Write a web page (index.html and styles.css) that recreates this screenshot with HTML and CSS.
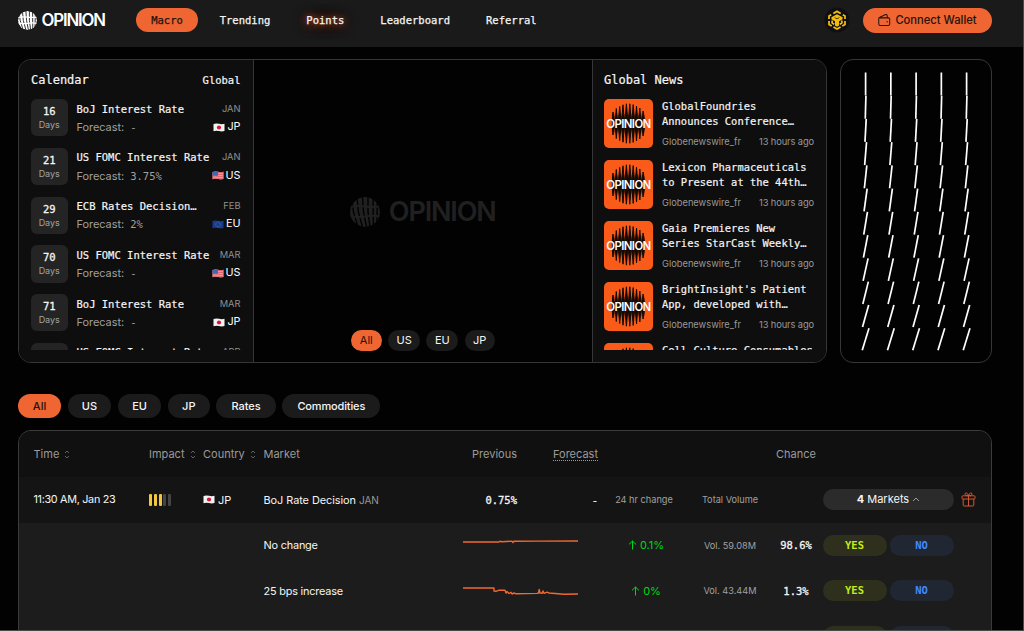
FILE: index.html
```html
<!DOCTYPE html>
<html lang="en">
<head>
<meta charset="utf-8">
<title>Opinion – Macro</title>
<link rel="stylesheet" href="styles.css">
</head>
<body>
<svg class="defs" width="0" height="0" aria-hidden="true">
  <defs>
    <clipPath id="disc"><circle cx="15" cy="15" r="15"/></clipPath>
    <linearGradient id="core" x1="0" x2="0" y1="0" y2="1"><stop offset="0" stop-color="#160a05" stop-opacity="0"/><stop offset=".35" stop-color="#160a05"/><stop offset=".65" stop-color="#160a05"/><stop offset="1" stop-color="#160a05" stop-opacity="0"/></linearGradient>
    <symbol id="globe" viewBox="0 0 30 30">
      <g clip-path="url(#disc)">
        <circle cx="15" cy="15" r="15" fill="currentColor"/>
        <g class="slits" fill="none" stroke-width="1.4">
          <path d="M1.5 0L3.5 15L8 30M7 0L8.4 15L12.5 30M12.5 0L13.5 15L16.5 30M18 0V15L20 30M23 0L23.4 30M27.4 0L26.8 30"/>
        </g>
        <path d="M0 10Q8 8.5 15 9.5T30 9.5M0 18.5Q7 21 15 19.5T30 19.5" fill="none" stroke="currentColor" stroke-width="2"/>
      </g>
    </symbol>
    <symbol id="jp" viewBox="0 0 12 9"><path d="M.5 1Q3 0 6 .8T11.5.7V8Q9 8.8 6 8.1T.5 8.2Z" fill="#f2f2f2"/><circle cx="6" cy="4.5" r="2.1" fill="#d5173c"/></symbol>
    <symbol id="us" viewBox="0 0 12 9"><path d="M.5 1Q3 0 6 .8T11.5.7V8Q9 8.8 6 8.1T.5 8.2Z" fill="#e8a9b0"/><path d="M.5 1.6Q3 .7 6 1.4T11.5 1.3M.5 3.5Q3 2.6 6 3.2T11.5 3.1M.5 5.4Q3 4.7 6 5.2T11.5 5M.5 7.4Q3 6.7 6 7.2T11.5 7" fill="none" stroke="#de5a62" stroke-width="1"/><path d="M.5 1Q3 0 6 .8V4.8H.5Z" fill="#3d68b4"/></symbol>
    <symbol id="eu" viewBox="0 0 12 9"><path d="M.5 1Q3 0 6 .8T11.5.7V8Q9 8.8 6 8.1T.5 8.2Z" fill="#153c95"/><circle cx="6" cy="4.5" r="2.3" fill="none" stroke="#8a905f" stroke-width=".6" stroke-dasharray=".7 .5"/></symbol>
    <symbol id="burst" viewBox="0 0 49 49">
      <path d="M8.3 20L9 13L9.7 20V29L9 36L8.3 29ZM11.4 20L12.3 9.5L13.2 20V29L12.3 39.5L11.4 29ZM14.6 20L15.7 7.5L16.8 20V29L15.7 41.5L14.6 29ZM17.8 20L19 5.8L20.2 20V29L19 43.2L17.8 29ZM21.1 20L22.4 4.8L23.7 20V29L22.4 44.2L21.1 29ZM24.5 20L25.8 4.8L27.1 20V29L25.8 44.2L24.5 29ZM28 20L29.2 5.6L30.4 20V29L29.2 43.4L28 29ZM31.4 20L32.5 7L33.6 20V29L32.5 42L31.4 29ZM34.8 20L35.8 9L36.8 20V29L35.8 40L34.8 29ZM38.2 20L39.1 12L40 20V29L39.1 37L38.2 29Z" fill="#160a05" stroke="#160a05" stroke-width="1"/>
      <path d="M8 14H41V35H8Z" fill="url(#core)"/>
    </symbol>
    <symbol id="sort" viewBox="0 0 6 9"><path d="M1 3L3 1L5 3M1 6L3 8L5 6" fill="none" stroke="currentColor" stroke-width=".8"/></symbol>
    <symbol id="up" viewBox="0 0 9 10"><path d="M4.5 9.5V1M1 4.4L4.5 1L8 4.4" fill="none" stroke="currentColor" stroke-width="1"/></symbol>
  </defs>
</svg>

<div class="page">
  <header class="topbar">
    <div class="brand"><svg class="brand-mark"><use href="#globe"/></svg><span class="brand-name">OPINION</span></div>
    <nav class="nav">
      <a class="nav-link active">Macro</a>
      <a class="nav-link">Trending</a>
      <a class="nav-link glow">Points</a>
      <a class="nav-link">Leaderboard</a>
      <a class="nav-link">Referral</a>
    </nav>
    <div class="actions">
      <svg class="chain" viewBox="0 0 28 28">
        <circle cx="14" cy="14" r="13.5" fill="#101014"/>
        <g fill="none" stroke="#f5bd0b" stroke-width="1.9" stroke-linejoin="round">
          <path d="M10 7L14 4.7L18 7M20.2 8.4L22.6 9.8V13M22.6 15V18.8L19.7 20.5M17.8 21.6L14 23.8L10.2 21.6M8.3 20.5L5.4 18.8V15M5.4 13V9.8L7.8 8.4"/>
          <path d="M8.8 14.5V17.2L11 18.5M19.2 14.5V17.2L17 18.5"/>
        </g>
        <path d="M14 7.8L20 11V13.2L16.2 15.4V20L14 21.2L11.8 20V15.4L8 13.2V11Z" fill="#f5bd0b"/><path d="M11.4 11.3L14 12.8L16.6 11.3" fill="none" stroke="#101014" stroke-width=".8"/>
      </svg>
      <button class="connect">
        <svg class="wallet" viewBox="0 0 14 14"><path d="M1.8 4.7H11.2Q12.6 4.7 12.6 6V11.3Q12.6 12.8 11.2 12.8H2.3Q.8 12.8.8 11.3V5.5Q.8 4.5 2 4L8.3 1.1Q9.5.7 9.8 2L10.1 4.5" fill="none" stroke="#241310" stroke-width="1.1"/><circle cx="9.8" cy="8.8" r=".8" fill="#241310"/></svg>
        <span>Connect Wallet</span>
      </button>
    </div>
  </header>

  <main class="content">
    <section class="hero">
      <div class="board">
        <div class="calendar">
          <div class="panel-head"><h2>Calendar</h2><span class="scope">Global</span></div>
          <div class="cal-list" id="calendar"></div>
        </div>
        <div class="map">
          <div class="watermark"><svg class="watermark-mark"><use href="#globe"/></svg><span>OPINION</span></div>
          <div class="map-tabs"><span class="on">All</span><span>US</span><span>EU</span><span>JP</span></div>
        </div>
        <div class="news">
          <div class="panel-head"><h2>Global News</h2></div>
          <div class="news-list" id="news"></div>
        </div>
      </div>
      <div class="ticks"><svg id="ticks" viewBox="0 0 150 302"></svg></div>
    </section>

    <div class="filters"><span class="on">All</span><span>US</span><span>EU</span><span>JP</span><span>Rates</span><span>Commodities</span></div>

    <section class="table">
      <div class="row head">
        <span>Time <svg class="sort"><use href="#sort"/></svg></span>
        <span>Impact <svg class="sort"><use href="#sort"/></svg></span>
        <span>Country <svg class="sort"><use href="#sort"/></svg></span>
        <span>Market</span>
        <span class="right">Previous</span>
        <span class="right"><u>Forecast</u></span>
        <span></span><span></span>
        <span class="right">Chance</span>
      </div>
      <div class="row event">
        <span class="time">11:30 AM, Jan 23</span>
        <span class="impact"><i></i><i></i><i></i><i class="off"></i><i class="off"></i></span>
        <span class="country"><svg class="flag"><use href="#jp"/></svg>JP</span>
        <span class="title">BoJ Rate Decision <em>JAN</em></span>
        <span class="right num">0.75%</span>
        <span class="right num">-</span>
        <span class="small center">24 hr change</span>
        <span class="small center">Total Volume</span>
        <span></span>
        <span class="markets"><b>4</b> Markets <svg class="caret" viewBox="0 0 8 5"><path d="M1 4L4 1L7 4" fill="none" stroke="#bbb" stroke-width=".8"/></svg></span>
        <svg class="gift" viewBox="0 0 15 15"><g fill="none" stroke="#cf5831" stroke-width="1"><rect x="1" y="3.8" width="13" height="3.2" rx=".8"/><path d="M2.2 7V13Q2.2 14 3.2 14H11.8Q12.8 14 12.8 13V7M7.5 4V14M7.5 3.8Q4 4.2 4 2.2Q4 .7 5.4 1Q7 1.4 7.5 3.8Q8 1.4 9.6 1Q11 .7 11 2.2Q11 4.2 7.5 3.8"/></g></svg>
      </div>
      <div class="option">
        <span class="name">No change</span>
        <svg class="spark" viewBox="0 0 115 30"><path d="M0 12H36L37 11.2L39 11.7L49 11.2L50 12.6L51 11.3L75 11.1L115 11"/></svg>
        <span class="delta"><svg><use href="#up"/></svg>0.1%</span>
        <span class="small volume">Vol. 59.08M</span>
        <span class="chance">98.6%</span>
        <span class="bet yes">YES</span><span class="bet no">NO</span>
      </div>
      <div class="option">
        <span class="name">25 bps increase</span>
        <svg class="spark" viewBox="0 0 115 30"><path d="M0 12H31V15L33 15.3L36 14.2H42L43 17L44 15.5L46 17.5L48 16.3L49 18L51 17L53 17.8L74 17.4L75.5 17L76.2 13.5L77 17L79 17.4L80 15L81 17.3L84 16.2L86 17L101 18.2L115 18"/></svg>
        <span class="delta"><svg><use href="#up"/></svg>0%</span>
        <span class="small volume">Vol. 43.44M</span>
        <span class="chance">1.3%</span>
        <span class="bet yes">YES</span><span class="bet no">NO</span>
      </div>
      <div class="option">
        <span class="name"></span>
        <svg class="spark" viewBox="0 0 115 30"></svg>
        <span class="delta"></span><span class="volume"></span><span class="chance"></span>
        <span class="bet yes"></span><span class="bet no"></span>
      </div>
    </section>
  </main>
</div>
<script src="app.js"></script>
</body>
</html>
```

FILE: styles.css
```css
* { box-sizing: border-box; }
body {
  margin: 0;
  background: #4a4a4a;
  color: #f5f5f5;
  font-family: Inter, "Liberation Sans", sans-serif;
  font-size: 11px;
  height: 631px;
  overflow: hidden;
}
.defs { display: block; width: 0; height: 0; }
.page { width: 1022.5px; height: 630px; background: #020202; overflow: hidden; }
svg { flex: none; display: block; }

/* Top bar */
.topbar {
  height: 47px;
  padding: 0 30.5px 7px 18px;
  background: #1a1a1a;
  display: flex;
  align-items: center;
  --slit: #1a1a1a;
}
.slits { stroke: var(--slit); }
.brand { display: flex; align-items: center; gap: 4.5px; color: #fff; width: 118px; }
.brand-mark { width: 19px; height: 19px; }
.brand-name { font: 600 16.8px/19px Inter, sans-serif; letter-spacing: -1.15px; }
.nav { display: flex; align-items: center; font: 500 10.52px "DejaVu Sans Mono", monospace; }
.nav-link { line-height: 24px; margin-right: 36px; white-space: nowrap; -webkit-text-stroke: .25px; }
.nav-link.active { width: 62px; text-align: center; background: #ef6632; color: #24130d; border-radius: 12px; margin-right: 21.7px; }
.nav-link.glow { text-shadow: 0 0 5px #c94a1b, 0 1px 10px #b84419, 0 1px 16px #7d2c0f; }
.actions { margin-left: auto; display: flex; align-items: center; gap: 13px; }
.chain { width: 26px; height: 26px; }
.connect {
  width: 129px; height: 25px; border: 0; border-radius: 13px; padding: 0;
  background: #ef6632; color: #24130d;
  font: 500 11.2px Inter, sans-serif;
  display: flex; align-items: center; justify-content: center; gap: 4px; white-space: nowrap;
}
.wallet { width: 13px; height: 14px; }

/* Hero panels */
.content { padding: 12px 30.5px 0 18px; }
.hero { display: flex; gap: 12.5px; height: 304px; }
.board { width: 809px; display: grid; grid-template-columns: 235px 337.5px 1fr; border: 1px solid #363636; border-radius: 13px; overflow: hidden; }
.calendar, .news { background: #0e0e0e; padding: 0 12px; }
.calendar { border-right: 1px solid #363636; padding-right: 12.5px; }
.news { border-left: 1px solid #363636; padding-left: 11.5px; }
.panel-head { height: 39.2px; padding-top: 1px; display: flex; align-items: center; justify-content: space-between; font-family: "DejaVu Sans Mono", monospace; }
.panel-head h2 { margin: 0; font-size: 12px; font-weight: 400; -webkit-text-stroke: .2px; }
.scope { font-size: 10.5px; -webkit-text-stroke: .2px; }
.cal-list { height: 251px; overflow: hidden; display: flex; flex-direction: column; gap: 12px; }
.cal-item { flex: none; height: 36.75px; display: grid; grid-template-columns: 36.5px 1fr auto; column-gap: 9px; }
.days { background: #242424; border-radius: 6px; text-align: center; padding-top: 6px; }
.days b { display: block; font: 500 10.5px/13px "DejaVu Sans Mono", monospace; -webkit-text-stroke: .3px; }
.days small { display: block; font-size: 9px; line-height: 14px; color: #a2a2a2; }
.cal-text { padding-top: .5px; line-height: 18.3px; white-space: nowrap; color: #a0a0a0; font-size: 10.9px; }
.cal-text b { display: block; font: 10.5px/18.3px "DejaVu Sans Mono", monospace; color: #f5f5f5; -webkit-text-stroke: .2px; }
.cal-text span { font-family: "DejaVu Sans Mono", monospace; font-size: 10.5px; margin-left: 6px; }
.cal-meta { padding-top: .5px; text-align: right; font-size: 9.3px; line-height: 18.3px; color: #909090; margin-left: -10px; }
.cal-meta div { display: flex; align-items: center; justify-content: flex-end; gap: 2px; color: #fff; font-size: 10.8px; }
.flag { width: 12px; height: 9px; }

.map { background: #020202; display: flex; flex-direction: column; align-items: center; }
.watermark { --slit: #020202; margin-top: 136.5px; display: flex; align-items: center; gap: 9px; color: #202020; }
.watermark-mark { width: 30px; height: 30px; }
.watermark span { font: 600 27px/30px Inter, sans-serif; letter-spacing: -1.15px; }
.map-tabs { display: flex; gap: 6.3px; margin-top: 103px; }
.map-tabs span, .filters span { background: #1b1b1b; border-radius: 13px; text-align: center; }
.map-tabs span { width: 32px; line-height: 21.5px; height: 21.5px; font-size: 11px; }
.map-tabs span.on, .filters span.on { background: #ef6632; color: #24130d; }
.map-tabs span.on { width: 31px; }
.map-tabs span:last-child { width: 30px; }

.news-list { height: 251px; overflow: hidden; display: flex; flex-direction: column; gap: 12px; }
.news-item { flex: none; height: 49px; display: grid; grid-template-columns: 49px 1fr; column-gap: 9px; }
.thumb { width: 49px; height: 49px; border-radius: 5px; background: #fb5b18; display: grid; place-items: center; overflow: hidden; }
.thumb > * { grid-area: 1 / 1; }
.thumb svg { width: 49px; height: 49px; }
.thumb span { font: 600 11.4px Inter, sans-serif; letter-spacing: -.6px; color: #fff; }
.story { white-space: pre; font: 10.45px/15.3px "DejaVu Sans Mono", monospace; -webkit-text-stroke: .2px; }
.byline { display: flex; justify-content: space-between; font: 9.3px/18px Inter, sans-serif; color: #999; padding-top: 3.4px; -webkit-text-stroke: 0; }
.byline span:last-child { letter-spacing: -.1px; }

.ticks { width: 152px; border: 1px solid #363636; border-radius: 13px; }
.ticks svg { width: 150px; height: 302px; }

/* Filters */
.filters { display: flex; gap: 6.5px; margin-top: 31px; font-size: 11px; }
.filters span { line-height: 24px; height: 24px; width: 43.8px; font-weight: 450; }
.filters span:first-child { width: 43px; }
.filters span:nth-child(3) { width: 43.5px; }
.filters span:nth-child(4) { width: 42px; }
.filters span:nth-child(5) { width: 59.5px; }
.filters span:nth-child(6) { width: 98px; letter-spacing: -.15px; }

/* Market table */
.table { margin-top: 12.4px; height: 230px; background: #1c1c1c; border: 1px solid #3b3b3b; border-radius: 13px; overflow: hidden; }
.row {
  height: 45.6px; padding-left: 14.5px; display: grid; align-items: center; white-space: nowrap;
  grid-template-columns: 115.5px 54px 60.5px 187px 66.5px 81px 92px 80px 46px 138px 1fr;
}
.head { background: #101010; color: #9b9b9b; font-size: 11px; }
.head span { display: flex; align-items: center; gap: 5px; }
.head .right { justify-content: flex-end; }
.head u { text-decoration: none; border-bottom: 1px dotted #999; line-height: 12px; }
.sort { width: 6px; height: 9px; color: #777; }
.event { background: #141414; }
.right { text-align: right; }
.center { text-align: center; }
.small { font-size: 9.2px; color: #a0a0a0; }
.time { font-size: 10.8px; letter-spacing: -.3px; }
.impact { display: flex; gap: 1.75px; }
.impact i { width: 3px; height: 12px; background: #f5c53c; border-radius: 1px; }
.impact .off { background: #444; }
.country { display: flex; align-items: center; gap: 3px; }
.title { font-size: 10.9px; letter-spacing: -.05px; }
.title em { font-style: normal; color: #999; font-size: 10px; }
.num, .chance { font: 10.5px "DejaVu Sans Mono", monospace; -webkit-text-stroke: .3px; }
.markets { justify-self: end; width: 131px; height: 21px; line-height: 21px; border-radius: 11px; background: #2b2b2b; display: flex; align-items: center; justify-content: center; gap: 3px; font-size: 11px; }
.caret { width: 8px; height: 5px; }
.gift { width: 15px; height: 15px; margin-left: 6.5px; }

/* Outcome rows */
.option { height: 45.6px; padding-left: 244.5px; display: flex; align-items: center; white-space: nowrap; }
.name { width: 199.5px; font-size: 10.9px; letter-spacing: -.2px; }
.spark { width: 115px; height: 30px; }
.spark path { fill: none; stroke: #f4672f; stroke-width: 1.4; stroke-linejoin: round; }
.delta { width: 92px; margin-left: 22px; display: flex; align-items: center; justify-content: center; gap: 3px; color: #00d717; }
.delta svg { width: 9px; height: 10px; }
.volume { width: 76px; text-align: center; }
.chance { width: 54.5px; padding-left: 1.5px; text-align: center; }
.bet { width: 64px; height: 21px; border-radius: 11px; text-align: center; font: bold 10.5px/21px "DejaVu Sans Mono", monospace; }
.yes { background: #2e301d; color: #c2ed18; }
.no { background: #202733; color: #438aff; margin-left: 3px; }
```

FILE: app.js
```js
const events = [
  ["16", "BoJ Interest Rate", "-", "JAN", "JP"],
  ["21", "US FOMC Interest Rate", "3.75%", "JAN", "US"],
  ["29", "ECB Rates Decision…", "2%", "FEB", "EU"],
  ["70", "US FOMC Interest Rate", "-", "MAR", "US"],
  ["71", "BoJ Interest Rate", "-", "MAR", "JP"],
  ["", "US FOMC Interest Rate", "", "APR", ""],
];
document.getElementById("calendar").innerHTML = events.map(([d, name, f, m, c]) => `
  <div class="cal-item">
    <div class="days">${d && `<b>${d}</b><small>Days</small>`}</div>
    <div class="cal-text"><b>${name}</b>${f && `Forecast:<span>${f}</span>`}</div>
    <div class="cal-meta">${m}${c && `<div><svg class="flag"><use href="#${c.toLowerCase()}"/></svg>${c}</div>`}</div>
  </div>`).join("");

const byline = `<div class="byline"><span>Globenewswire_fr</span><span>13 hours ago</span></div>`;
const stories = [
  "GlobalFoundries\nAnnounces Conference…" + byline,
  "Lexicon Pharmaceuticals\nto Present at the 44th…" + byline,
  "Gaia Premieres New\nSeries StarCast Weekly…" + byline,
  "BrightInsight's Patient\nApp, developed with…" + byline,
  "Cell Culture Consumables",
];
document.getElementById("news").innerHTML = stories.map((s, i) => `
  <div class="news-item">
    <div class="thumb"><svg><use href="#burst"/></svg>${i < 4 ? "<span>OPINION</span>" : ""}</div>
    <div class="story">${s}</div>
  </div>`).join("");

// Field of strokes: each row leans a little further than the one above.
let strokes = "";
for (let r = 0; r < 12; r++) {
  for (let c = 0; c < 5; c++) {
    const x = 24.6 + c * 25.25, y = 24 + r * 23.2;
    strokes += `<line x1="${x}" x2="${x}" y1="${y - 11.5}" y2="${y + 11.5}" transform="rotate(${1.55 * r} ${x} ${y})" stroke="#fff" stroke-width="1.7"/>`;
  }
}
document.getElementById("ticks").innerHTML = strokes;
```
